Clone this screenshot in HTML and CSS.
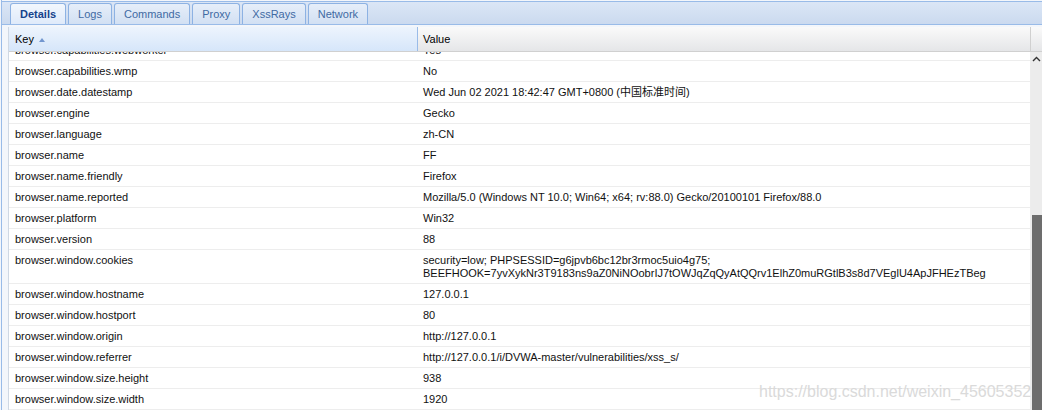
FILE: index.html
```html
<!DOCTYPE html>
<html>
<head>
<meta charset="utf-8">
<link rel="stylesheet" href="styles.css">
</head>
<body>
<div class="app">
  <div class="tabstrip">
    <div class="tab active">Details</div>
    <div class="tab">Logs</div>
    <div class="tab">Commands</div>
    <div class="tab">Proxy</div>
    <div class="tab">XssRays</div>
    <div class="tab">Network</div>
  </div>
  <div class="main">
    <div class="grid">
      <div class="ghead">
        <div class="hcell hkey">Key <span class="sort-arrow"></span></div>
        <div class="hcell hval">Value</div>
        <div class="hcell hfill"></div>
      </div>
      <div class="gbody">
        <div class="viewport">
          <div class="rows">
            <div class="row"><div class="c key">browser.capabilities.webworker</div><div class="c val">Yes</div></div>
            <div class="row"><div class="c key">browser.capabilities.wmp</div><div class="c val">No</div></div>
            <div class="row"><div class="c key">browser.date.datestamp</div><div class="c val">Wed Jun 02 2021 18:42:47 GMT+0800 (中国标准时间)</div></div>
            <div class="row"><div class="c key">browser.engine</div><div class="c val">Gecko</div></div>
            <div class="row"><div class="c key">browser.language</div><div class="c val">zh-CN</div></div>
            <div class="row"><div class="c key">browser.name</div><div class="c val">FF</div></div>
            <div class="row"><div class="c key">browser.name.friendly</div><div class="c val">Firefox</div></div>
            <div class="row"><div class="c key">browser.name.reported</div><div class="c val">Mozilla/5.0 (Windows NT 10.0; Win64; x64; rv:88.0) Gecko/20100101 Firefox/88.0</div></div>
            <div class="row"><div class="c key">browser.platform</div><div class="c val">Win32</div></div>
            <div class="row"><div class="c key">browser.version</div><div class="c val">88</div></div>
            <div class="row"><div class="c key">browser.window.cookies</div><div class="c val">security=low; PHPSESSID=g6jpvb6bc12br3rmoc5uio4g75;<br>BEEFHOOK=7yvXykNr3T9183ns9aZ0NiNOobrIJ7tOWJqZqQyAtQQrv1ElhZ0muRGtlB3s8d7VEglU4ApJFHEzTBeg</div></div>
            <div class="row"><div class="c key">browser.window.hostname</div><div class="c val">127.0.0.1</div></div>
            <div class="row"><div class="c key">browser.window.hostport</div><div class="c val">80</div></div>
            <div class="row"><div class="c key">browser.window.origin</div><div class="c val">http://127.0.0.1</div></div>
            <div class="row"><div class="c key">browser.window.referrer</div><div class="c val">http://127.0.0.1/i/DVWA-master/vulnerabilities/xss_s/</div></div>
            <div class="row"><div class="c key">browser.window.size.height</div><div class="c val">938</div></div>
            <div class="row"><div class="c key">browser.window.size.width</div><div class="c val">1920</div></div>
          </div>
        </div>
        <div class="vscroll">
          <svg class="up" width="9" height="6" viewBox="0 0 9 6"><path d="M1 5 L4.5 1.5 L8 5" fill="none" stroke="#333" stroke-width="1.4"/></svg>
          <div class="thumb"></div>
        </div>
      </div>
    </div>
  </div>
  <div class="watermark">https://blog.csdn.net/weixin_45605352</div>
</div>
</body>
</html>
```
FILE: styles.css
```css
html, body {
  margin: 0;
  padding: 0;
}
body {
  width: 1042px;
  height: 410px;
  overflow: hidden;
  background: #f3f6fb;
  font-family: "Liberation Sans", Arial, "Noto Sans CJK SC", sans-serif;
}
.app {
  position: relative;
  height: 410px;
  margin-left: 1px;
  border-left: 1px solid #99bbe8;
  display: flex;
  flex-direction: column;
}
.tabstrip {
  margin-top: 1px;
  height: 22px;
  border-top: 1px solid #99bbe8;
  border-bottom: 1px solid #99bbe8;
  background: linear-gradient(#dbe6f6, #cbdaef);
  padding-left: 8px;
  display: flex;
  align-items: flex-end;
  gap: 2px;
}
.tab {
  height: 20px;
  line-height: 20px;
  padding: 0 9px;
  border: 1px solid #8db2e3;
  border-bottom: none;
  border-radius: 3px 3px 0 0;
  font-size: 11px;
  color: #416aa3;
  background: linear-gradient(#e6eef9, #d2e0f3);
}
.tab.active {
  color: #15428b;
  font-weight: bold;
  background: linear-gradient(#f2f7fd, #dfeafa);
}
.main {
  flex: 1;
  padding: 2px 0 0 6px;
  min-height: 0;
  display: flex;
}
.grid {
  flex: 1;
  display: flex;
  flex-direction: column;
  border-left: 1px solid #cfd8e4;
  background: #fff;
  min-height: 0;
}
.ghead {
  display: flex;
  height: 24px;
  border-bottom: 1px solid #d0d0d0;
  font-size: 11px;
  color: #000;
}
.hcell {
  line-height: 25px;
  background: linear-gradient(#fafafa, #e5e6e8);
  box-sizing: border-box;
}
.hkey {
  width: 409px;
  padding-left: 6px;
  background: linear-gradient(#edf4fd, #d6e6fa);
  border-right: 1px solid #99bbe8;
  display: flex;
  align-items: center;
  gap: 5px;
}
.sort-arrow {
  width: 0;
  height: 0;
  border-left: 3.5px solid transparent;
  border-right: 3.5px solid transparent;
  border-bottom: 4px solid #7296cf;
  margin-top: 1px;
}
.hval {
  flex: 1;
  padding-left: 5px;
  border-right: 1px solid #d0d0d0;
}
.hfill {
  width: 11px;
}
.gbody {
  flex: 1;
  display: flex;
  min-height: 0;
}
.viewport {
  flex: 1;
  overflow: hidden;
}
.rows {
  margin-top: -12px;
}
.row {
  display: flex;
  border-bottom: 1px solid #ededed;
  border-right: 1px solid #ededed;
  font-size: 11px;
  line-height: 13px;
  color: #111;
}
.c {
  padding-top: 4px;
  padding-bottom: 3px;
  box-sizing: border-box;
}
.key {
  width: 409px;
  padding-left: 6px;
}
.val {
  flex: 1;
  padding-left: 5px;
}
.vscroll {
  width: 11px;
  background: #ececec;
  display: flex;
  flex-direction: column;
  align-items: flex-end;
}
.up {
  margin-top: 4px;
  margin-right: 1px;
}
.thumb {
  margin-top: auto;
  width: 10px;
  height: 195px;
  background: #6d6d6d;
}
.watermark {
  position: absolute;
  left: 757px;
  top: 383px;
  font-size: 16px;
  color: #dadada;
  white-space: nowrap;
}
```
